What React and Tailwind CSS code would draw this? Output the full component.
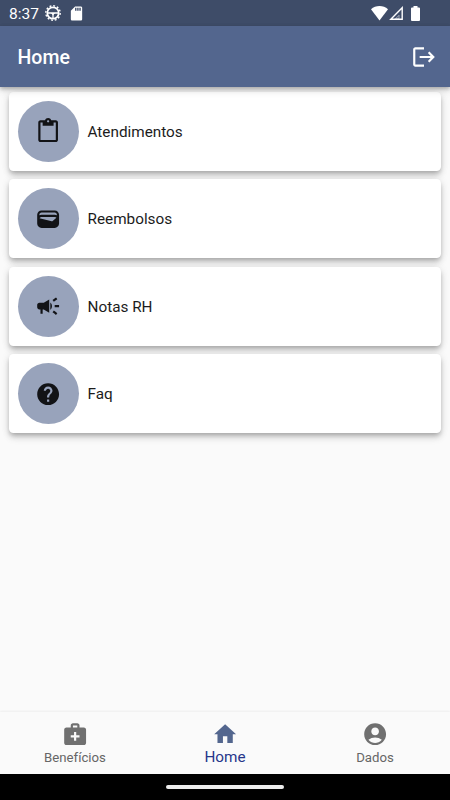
import React from 'react'
import {
  MdAccountCircle,
  MdCampaign,
  MdHelp,
  MdHome,
  MdLogout,
  MdMedicalServices,
  MdSdCard,
  MdWallet,
} from 'react-icons/md'

function ClipboardIcon({ className }) {
  return (
    <svg className={className} viewBox="0 0 24 24" fill="currentColor">
      <path d="M19 2h-4.180C14.400.840 13.300 0 12 0S9.600.840 9.180 2H5c-1.100 0-2 .9-2 2v16c0 1.100.9 2 2 2h14c1.100 0 2-.9 2-2V4c0-1.100-.9-2-2-2zm-7 0c.55 0 1 .45 1 1s-.45 1-1 1-1-.45-1-1 .45-1 1-1zm7 18H5V4h2v3h10V4h2v16z" />
    </svg>
  )
}

const menuItems = [
  { label: 'Atendimentos', icon: ClipboardIcon },
  { label: 'Reembolsos', icon: MdWallet },
  { label: 'Notas RH', icon: MdCampaign },
  { label: 'Faq', icon: MdHelp },
]

const tabs = [
  { label: 'Benefícios', icon: MdMedicalServices },
  { label: 'Home', icon: MdHome, active: true },
  { label: 'Dados', icon: MdAccountCircle },
]

function StatusBar() {
  return (
    <div className="flex h-[26px] shrink-0 items-center bg-[#3e4c68] pl-[9px] pr-[30px] text-white">
      <span className="w-[36px] pt-[3px] text-[15.5px] leading-none">8:37</span>

      {/* Gear */}
      <svg className="size-4 shrink-0" viewBox="0 0 16 16" fill="none" stroke="currentColor">
        <circle cx="8" cy="8" r="7.2" strokeWidth="1.4" strokeDasharray="1.9 1.87" />
        <circle cx="8" cy="8" r="5.7" strokeWidth="1.7" />
        <path d="M2.500 8h11M8 8v5.500" strokeWidth="1.3" />
        <path d="M5.800 8L8 10.300 10.200 8z" fill="currentColor" stroke="none" />
      </svg>
      <MdSdCard className="ml-[7px] size-[17px]" />

      <div className="ml-auto flex items-center">
        {/* Wifi */}
        <svg className="h-[15px] w-[17px]" viewBox="0 0 17 15" fill="currentColor">
          <path d="M0 3.200C2.400 1.200 5.300 0 8.500 0s6.100 1.200 8.500 3.200L8.500 14.500z" />
        </svg>
        {/* Mobile signal */}
        <svg className="ml-px mr-px h-[14px] w-[14px]" viewBox="0 0 14 14" fill="none" stroke="currentColor">
          <path d="M1.800 13.200L13.200 1.800V13.200z" strokeWidth="1.4" />
          <path d="M6.500 12.800L10 9.300v3.500z" strokeWidth="0.5" />
        </svg>
        {/* Battery */}
        <svg className="ml-[7px] h-[15px] w-[9px]" viewBox="0 0 9 15" fill="currentColor">
          <path d="M2.500 0h4v1.500H8q1 0 1 1V14q0 1-1 1H1q-1 0-1-1V2.500q0-1 1-1h1.500z" />
        </svg>
      </div>
    </div>
  )
}

function AppHeader() {
  return (
    <header className="relative z-10 flex h-[61.25px] shrink-0 items-center justify-between bg-[#53668e] pl-[17.5px] pr-[13.5px] text-white shadow-[0_2px_4px_rgba(0,0,0,0.26),0_4px_8px_rgba(0,0,0,0.1)]">
      <h1 className="pt-[2px] text-[19.5px] leading-none font-medium">Home</h1>
      <button type="button" aria-label="Sair">
        <MdLogout className="size-[26px]" />
      </button>
    </header>
  )
}

function MenuCard({ label, icon: Icon }) {
  return (
    <li className="flex h-[78.75px] items-center gap-[8.75px] rounded-[4.4px] bg-white px-[8.75px] shadow-[0_3px_4px_-1px_rgba(0,0,0,0.2),0_5px_7px_rgba(0,0,0,0.13),0_1px_10px_rgba(0,0,0,0.09)]">
      <span className="flex size-[61.25px] items-center justify-center rounded-full bg-[#98a3bb]">
        <Icon className="size-[26.25px] text-[#121316]" />
      </span>
      <span className="pt-[1.5px] text-[15.3px] text-[#1c1c1c]">{label}</span>
    </li>
  )
}

function BottomNav() {
  return (
    <nav className="grid h-[61.5px] shrink-0 grid-cols-3 bg-[#fafafa] shadow-[0_-1px_2px_rgba(0,0,0,0.05)]">
      {tabs.map(({ label, icon: Icon, active }) => (
        <a key={label} href="#" className="flex flex-col items-center pt-[9px]">
          <Icon className={active ? 'size-[26.25px] text-[#53668e]' : 'size-[26.25px] text-[#707070]'} />
          <span
            className={
              active
                ? 'pt-px text-[15.3px] leading-[18px] text-[#27368a]'
                : 'pt-[2px] text-[13.2px] leading-[18px] text-[#666666]'
            }
          >
            {label}
          </span>
        </a>
      ))}
    </nav>
  )
}

function App() {
  return (
    <div className="flex h-[800px] w-[450px] flex-col overflow-hidden bg-[#fafafa] font-['Roboto',sans-serif]">
      <StatusBar />
      <AppHeader />
      <main className="min-h-0 flex-1 px-[8.75px] pt-[4.7px]">
        <ul className="flex flex-col gap-[8.75px]">
          {menuItems.map((item) => (
            <MenuCard key={item.label} {...item} />
          ))}
        </ul>
      </main>
      <BottomNav />
      <div className="flex h-[26.5px] shrink-0 items-center justify-center bg-black">
        <div className="h-[4.4px] w-[118px] rounded-full bg-[#ececec]" />
      </div>
    </div>
  )
}

export default App
